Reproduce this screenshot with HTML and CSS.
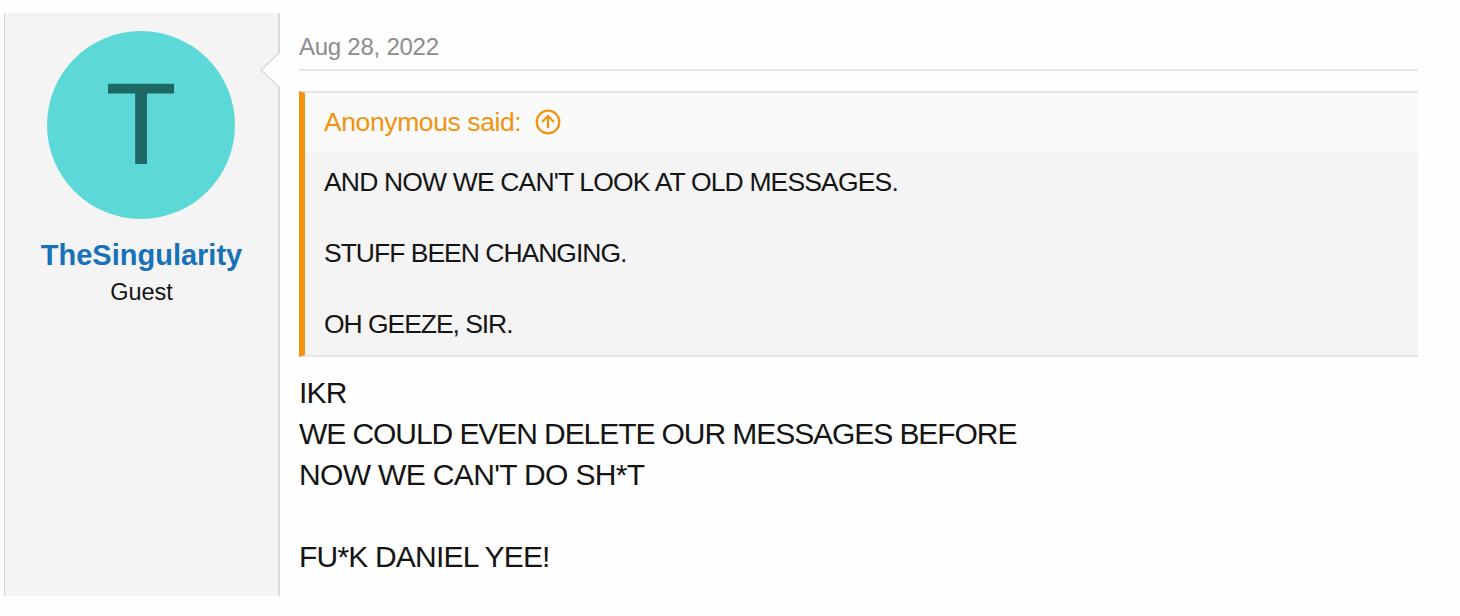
FILE: index.html
```html
<!DOCTYPE html>
<html lang="en">
  <head>
    <meta charset="UTF-8" />
    <meta name="viewport" content="width=device-width, initial-scale=1.0" />
    <title>Forum Post</title>
    <link rel="stylesheet" href="styles.css">
  </head>
  <body>
    <article class="message">
      <aside class="message-user">
        <span class="message-arrow"></span>
        <div class="avatar">T</div>
        <h4 class="message-name">TheSingularity</h4>
        <h5 class="message-title">Guest</h5>
      </aside>
      <div class="message-main">
        <header class="message-date"><time datetime="2022-08-28">Aug 28, 2022</time></header>
        <blockquote class="quote">
          <div class="quote-title">
            <span class="quote-author">Anonymous said:</span>
            <svg class="quote-icon" viewBox="0 0 26 26" fill="none">
              <circle cx="13" cy="13" r="11.3" />
              <path d="M13 19.2V7.6M7 13L13 7L19 13" />
            </svg>
          </div>
          <div class="quote-content">
            <p class="quote-line-1">AND NOW WE CAN'T LOOK AT OLD MESSAGES.</p>
            <p class="quote-line-2">STUFF BEEN CHANGING.</p>
            <p class="quote-line-3">OH GEEZE, SIR.</p>
          </div>
        </blockquote>
        <div class="message-body">
          <span class="body-line-1">IKR</span><br>
          <span class="body-line-2">WE COULD EVEN DELETE OUR MESSAGES BEFORE</span><br>
          <span class="body-line-3">NOW WE CAN'T DO SH*T</span><br>
          <br>
          <span class="body-line-4">FU*K DANIEL YEE!</span>
        </div>
      </div>
    </article>
  </body>
</html>
```

FILE: styles.css
```css
* {
  box-sizing: border-box;
}

body {
  font-family: "Helvetica Neue", "Liberation Sans", Arial, sans-serif;
  margin: 0;
  background-color: #fefefe;
  color: #141414;
}

.message {
  display: flex;
  height: 583px;
  margin: 13px 42px 0 4px;
}

.message-user {
  position: relative;
  width: 276px;
  flex-shrink: 0;
  padding-top: 18px;
  background-color: #f4f4f4;
  border-left: 1px solid #d4d4d4;
  border-right: 2px solid #d8d8d8;
  text-align: center;
}

/* notch pointing from the post to the user */
.message-arrow {
  position: absolute;
  top: 38px;
  right: -2px;
  width: 20px;
  height: 38px;
  background-color: #d8d8d8;
  clip-path: polygon(100% 0, 0 50%, 100% 100%);
}

.message-arrow::after {
  content: "";
  position: absolute;
  inset: 0;
  background-color: #fefefe;
  clip-path: polygon(100% 2px, 2px 50%, 100% 36px);
}

.avatar {
  width: 188px;
  height: 188px;
  margin: 0 0 0 42px;
  border-radius: 50%;
  background-color: #5cd9d6;
  color: #1d6764;
  font-size: 115px;
  line-height: 187px;
  -webkit-text-stroke: 1px #1d6764;
}

.message-name {
  margin: 18px 0 0;
  color: #1872b8;
  font-size: 29px;
  line-height: 36px;
}

.message-title {
  margin: 3px 0 0;
  font-size: 23.5px;
  font-weight: normal;
  line-height: 32px;
}

.message-main {
  flex: 1;
  padding: 16px 0 0 19px;
}

.message-date {
  height: 42px;
  padding-top: 4px;
  border-bottom: 2px solid #e5e5e5;
  color: #8c8c8c;
  font-size: 24px;
  letter-spacing: -0.25px;
  line-height: 28px;
}

.quote {
  height: 266px;
  margin: 20px 0 0;
  border: 2px solid #e5e5e5;
  border-left: 6px solid #f2930d;
  border-right: 0;
  background-color: #f4f4f4;
  font-size: 26.5px;
}

.quote-title {
  display: flex;
  align-items: center;
  gap: 14px;
  height: 60px;
  padding: 0 0 3px 19px;
  background-color: #fafafa;
  color: #f2930d;
}

.quote-author {
  padding-top: 2px;
  letter-spacing: -0.4px;
}

.quote-icon {
  width: 26px;
  height: 26px;
  stroke: #f2930d;
  stroke-width: 2.2;
}

.quote-content {
  padding: 12px 19px;
}

.quote-content p {
  margin: 0 0 35.5px;
  line-height: 35.5px;
}

.quote-line-1 {
  letter-spacing: -0.84px;
}

.quote-line-2 {
  letter-spacing: -1px;
}

.quote-line-3 {
  letter-spacing: -1.05px;
}

.message-body {
  margin-top: 15px;
  font-size: 30px;
  line-height: 41px;
}

.body-line-1,
.body-line-4 {
  letter-spacing: -0.8px;
}

.body-line-2 {
  letter-spacing: -1.07px;
}

.body-line-3 {
  letter-spacing: -0.65px;
}
```
